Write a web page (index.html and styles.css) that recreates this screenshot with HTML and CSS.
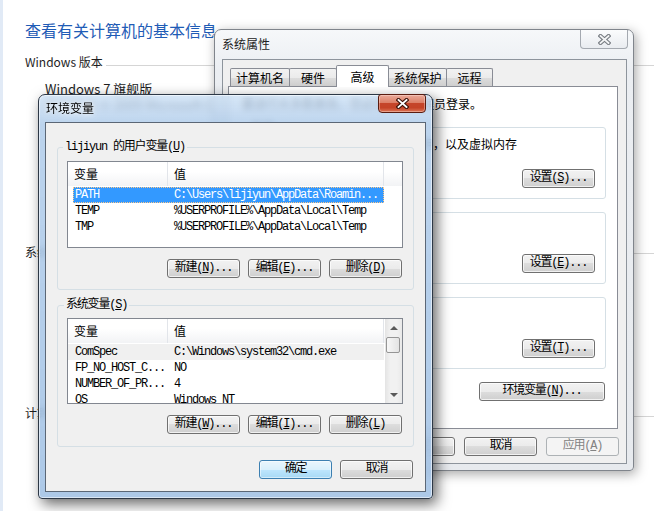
FILE: index.html
```html
<!DOCTYPE html>
<html lang="zh-CN">
<head>
<meta charset="utf-8">
<title>环境变量</title>
<link rel="stylesheet" href="styles.css">
</head>
<body>
<main class="cp">
  <h1 class="cp-title">查看有关计算机的基本信息</h1>
  <div class="cp-sec cp-ver"><span>Windows 版本</span><i class="cp-rule"></i></div>
  <p class="cp-line cp-edition">Windows 7 旗舰版</p>
  <p class="cp-line">版权所有 © 2009 Microsoft Corporation。保留所有权利。</p>
  <div class="cp-sec cp-sys"><span>系统</span><i class="cp-rule"></i></div>
  <div class="cp-sec cp-name"><span>计算机名称、域和工作组设置</span><i class="cp-rule"></i></div>
</main>

<section class="win win-sys">
  <header class="titlebar">
    <span class="title">系统属性</span>
    <span class="close close-inactive">
      <svg width="13" height="11" viewBox="0 0 13 11"><path d="M2.5 2 L10.5 9 M10.5 2 L2.5 9" stroke="#777c82" stroke-width="4" stroke-linecap="square"/><path d="M2.5 2 L10.5 9 M10.5 2 L2.5 9" stroke="#f4f5f6" stroke-width="1.8" stroke-linecap="square"/></svg>
    </span>
  </header>
  <div class="client sys-client">
    <nav class="tabs">
      <span class="tab tab-name">计算机名</span>
      <span class="tab tab-hw">硬件</span>
      <span class="tab tab-adv active">高级</span>
      <span class="tab tab-prot">系统保护</span>
      <span class="tab tab-remote">远程</span>
    </nav>
    <div class="sys-panel">
      <p class="admin-note">要进行大多数更改，您必须作为管理员登录。</p>
      <fieldset class="group sys-group">
        <legend>性能</legend>
        <p class="group-text">视觉效果，处理器计划，内存使用，以及虚拟内存</p>
        <div class="btn-row"><button class="btn">设置(<u>S</u>)...</button></div>
      </fieldset>
      <fieldset class="group sys-group">
        <legend class="legend-hidden"></legend>
        <div class="group-gap"></div>
        <div class="btn-row"><button class="btn">设置(<u>E</u>)...</button></div>
      </fieldset>
      <fieldset class="group sys-group">
        <legend class="legend-hidden"></legend>
        <div class="group-gap"></div>
        <div class="btn-row"><button class="btn">设置(<u>T</u>)...</button></div>
      </fieldset>
      <div class="btn-row env-row"><button class="btn btn-wide">环境变量(<u>N</u>)...</button></div>
    </div>
    <div class="btn-row dlg-row">
      <button class="btn">确定</button>
      <button class="btn">取消</button>
      <button class="btn" disabled>应用(<u>A</u>)</button>
    </div>
  </div>
</section>

<section class="win win-env">
  <header class="titlebar">
    <span class="title">环境变量</span>
    <span class="close close-active">
      <svg width="13" height="11" viewBox="0 0 13 11"><path d="M2.5 2 L10.5 9 M10.5 2 L2.5 9" stroke="#3b1209" stroke-width="4" stroke-linecap="square"/><path d="M2.5 2 L10.5 9 M10.5 2 L2.5 9" stroke="#ffffff" stroke-width="1.8" stroke-linecap="square"/></svg>
    </span>
  </header>
  <div class="client env-client">
    <fieldset class="group env-group">
      <legend class="sim legend-user">lijiyun 的用户变量(<u>U</u>)</legend>
      <div class="list">
        <div class="lv-main">
          <div class="lv-head"><span class="hc c1">变量</span><span class="hc c2">值</span><span class="hc hfill"></span></div>
          <div class="lv-rows sim">
            <div class="row sel"><span class="c1">PATH</span><span class="c2">C:\Users\lijiyun\AppData\Roamin...</span></div>
            <div class="row"><span class="c1">TEMP</span><span class="c2">%USERPROFILE%\AppData\Local\Temp</span></div>
            <div class="row"><span class="c1">TMP</span><span class="c2">%USERPROFILE%\AppData\Local\Temp</span></div>
          </div>
        </div>
      </div>
      <div class="btn-row">
        <button class="btn">新建(<u>N</u>)...</button>
        <button class="btn">编辑(<u>E</u>)...</button>
        <button class="btn">删除(<u>D</u>)</button>
      </div>
    </fieldset>
    <fieldset class="group env-group">
      <legend class="sim legend-sys">系统变量(<u>S</u>)</legend>
      <div class="list sys-list">
        <div class="lv-main">
          <div class="lv-head"><span class="hc c1">变量</span><span class="hc c2">值</span><span class="hc hfill"></span></div>
          <div class="lv-rows sim">
            <div class="row hot"><span class="c1">ComSpec</span><span class="c2">C:\Windows\system32\cmd.exe</span></div>
            <div class="row"><span class="c1">FP_NO_HOST_C...</span><span class="c2">NO</span></div>
            <div class="row"><span class="c1">NUMBER_OF_PR...</span><span class="c2">4</span></div>
            <div class="row"><span class="c1">OS</span><span class="c2">Windows_NT</span></div>
          </div>
        </div>
        <div class="vscroll">
          <span class="sb-btn sb-up"></span>
          <span class="sb-thumb"></span>
          <span class="sb-track"></span>
          <span class="sb-btn sb-down"></span>
        </div>
      </div>
      <div class="btn-row">
        <button class="btn">新建(<u>W</u>)...</button>
        <button class="btn">编辑(<u>I</u>)...</button>
        <button class="btn">删除(<u>L</u>)</button>
      </div>
    </fieldset>
    <div class="btn-row env-dlg-row">
      <button class="btn btn-default">确定</button>
      <button class="btn">取消</button>
    </div>
  </div>
</section>
</body>
</html>
```
FILE: styles.css
```css
* { box-sizing: border-box; }
html, body { margin: 0; padding: 0; }
body {
  width: 654px; height: 511px; overflow: hidden; position: relative;
  background: #fff; color: #000;
  font: 12px/16px "Noto Sans CJK SC", "Microsoft YaHei", sans-serif;
}
p { margin: 0; }
.sim { font-family: "Liberation Mono", "Noto Sans CJK SC", monospace; letter-spacing: -1.2px; }

/* background control panel */
.cp { height: 511px; border-left: 3px solid #e1eaf6; padding-left: 22px; }
.cp-title { margin: 0; padding-top: 21px; font-size: 16px; line-height: 18px; font-weight: normal; color: #1f5cb6; }
.cp-sec { display: flex; align-items: center; gap: 3px; margin-top: 15px; color: #1e1e1e; }
.cp-rule { flex: 1; height: 1px; background: #d5d5d5; margin-top: 6px; }
.cp-line { margin-left: 20px; font-size: 13px; color: #1e1e1e; }
.cp-edition { margin-top: 11px; }
.cp-sys { margin-top: 131px; }
.cp-name { margin-top: 145px; }
.cp-sys .cp-rule { margin-top: 3px; }

/* windows */
.win { position: absolute; display: flex; flex-direction: column; border-radius: 7px 7px 4px 4px; }
.win-sys {
  left: 214px; top: 29px; width: 420px; height: 442px;
  padding: 0 6px 6px 7px;
  border: 1px solid #80858c;
  background: linear-gradient(#f6f8fa, #ebeef2 40px, #e7eaee);
  box-shadow: 2px 3px 12px rgba(0,0,0,.35);
}
.win-env {
  left: 38px; top: 94px; width: 395px; height: 405px;
  padding: 0 6px 6px;
  border: 1px solid #2d3846;
  background: linear-gradient(rgba(204,224,245,.8), rgba(176,204,234,.85) 30px, rgba(164,195,229,.9));
  backdrop-filter: blur(3px);
  box-shadow: 4px 5px 14px rgba(0,0,0,.6), inset 0 0 0 1px rgba(255,255,255,.55);
}
.titlebar { flex: none; display: flex; align-items: flex-start; justify-content: space-between; }
.win-sys .titlebar { height: 29px; margin-right: -1px; }
.win-env .titlebar { height: 27px; padding-left: 1px; }
.title { padding-top: 6px; line-height: 16px; color: #222; }
.win-env .title { padding-top: 5px; color: #000; text-shadow: 0 0 8px #fff, 0 0 4px #fff; }
.close { display: flex; align-items: center; justify-content: center; width: 48px; height: 19px; border-radius: 0 0 4px 4px; }
.close-inactive { border: 1px solid #a4a9b0; border-top: none; background: linear-gradient(#fbfcfd, #e9ecf0); }
.close-active {
  margin-top: -1px; border: 1px solid #5a1c10; border-radius: 3px 3px 4px 4px;
  background: linear-gradient(#eaa999, #dc8068 45%, #c5452a 50%, #c44327 75%, #dd7658);
  box-shadow: inset 0 0 0 1px rgba(255,230,220,.4);
}

.client { flex: 1; display: flex; flex-direction: column; background: #f0f0f0; border: 1px solid #8d949c; }
.sys-client { padding-top: 5px; }
.env-client { border-color: #5b6776; padding: 17px 11px 0; }

/* tabs */
.tabs { display: flex; align-items: flex-end; padding-left: 7px; height: 21px; flex: none; }
.tab {
  height: 18px; margin-right: -1px;
  border: 1px solid #898c95; border-bottom: none; border-radius: 2px 2px 0 0;
  background: linear-gradient(#f2f2f2, #ebebeb 50%, #dddddd 50%, #cfcfcf);
  display: flex; align-items: center; justify-content: center; line-height: 14px;
}
.tab.active { height: 22px; margin-bottom: -1px; background: #fff; position: relative; z-index: 1; }
.tab-name { width: 60px; }
.tab-hw { width: 48px; }
.tab-adv { width: 53px; }
.tab-prot { width: 59px; }
.tab-remote { width: 47px; }

.sys-panel { flex: none; height: 343px; margin: 0 8px 0 5px; padding: 9px 11px 0; background: #fff; border: 1px solid #898c95; }
.admin-note { padding-left: 2px; }

.group { margin: 0; min-width: 0; border: 1px solid #d5dfe5; border-radius: 3px; }
.group legend { padding: 0 2px; line-height: 14px; }
.sys-group { margin-top: 6px; padding: 2px 10px 10px 12px; }
.sys-group:first-of-type { margin-top: 8px; }
.sys-group legend { margin-left: -4px; }
.sys-group .legend-hidden { height: 14px; width: 0; padding: 0; }
.group-gap { height: 16px; }

/* buttons */
.btn-row { display: flex; justify-content: flex-end; gap: 8px; }
.sys-group .btn-row { margin-top: 17px; }
.env-row { margin-top: 13px; margin-right: 1px; }
.dlg-row { margin-top: 8px; padding-right: 7px; gap: 9px; }
.btn {
  width: 73px; height: 19px; padding: 0; margin: 0;
  border: 1px solid #707070; border-radius: 3px;
  background: linear-gradient(#f2f2f2, #ebebeb 50%, #dddddd 50%, #cfcfcf);
  box-shadow: inset 0 0 0 1px rgba(255,255,255,.7);
  font: 12px/17px "Liberation Mono", "Noto Sans CJK SC", monospace; letter-spacing: -1.2px; color: #000;
  display: flex; align-items: center; justify-content: center;
}
.btn-wide { width: 126px; }
.btn-default { border-color: #3c7fb1; background: linear-gradient(#eaf6fd, #d9f0fc 50%, #bee6fd 50%, #a7d9f5); box-shadow: inset 0 0 0 1px rgba(255,255,255,.5); }
.btn:disabled { border-color: #adb2b5; background: #f4f4f4; box-shadow: none; color: #838383; }

/* env dialog */
.env-group { padding: 7px 10px 11px 9px; }
.env-group + .env-group { margin-top: 8px; padding-top: 6px; padding-bottom: 12px; }
.env-group .btn-row { margin-top: 11px; margin-right: 1px; }
.legend-user { margin-left: -4px; }
.legend-sys { margin-left: -3px; }
.env-dlg-row { margin-top: 13px; padding-right: 1px; }

.list { display: flex; height: 87px; border: 1px solid #828790; background: #fff; overflow: hidden; }
.sys-list { height: 86px; }
.lv-main { flex: 1; min-width: 0; display: flex; flex-direction: column; }
.lv-head { display: flex; flex: none; height: 24px; background: linear-gradient(#fff, #fff 40%, #f2f3f5); }
.hc { border-right: 1px solid #e2e5ea; padding-left: 6px; line-height: 23px; }
.c1 { width: 100px; flex: none; }
.c2 { width: 216px; flex: none; }
.hfill { flex: 1; border-right: none; }
.lv-rows { padding-top: 1px; }
.row { display: flex; height: 16px; line-height: 16px; width: 316px; white-space: nowrap; }
.row .c1 { padding-left: 7px; }
.row .c2 { padding-left: 6px; }
.row.sel { margin-left: 5px; width: 311px; background: #3399ff; color: #fff; outline: 1px dotted #ffc98a; outline-offset: -1px; }
.row.sel .c1 { width: 95px; padding-left: 2px; }
.row.hot { background: #f0f0f0; }

.vscroll {
  flex: none; width: 17px; display: flex; flex-direction: column;
  background: linear-gradient(90deg, #e4e4e4, #f1f1f1 30%, #f1f1f1 70%, #e9e9e9);
}
.sb-btn { flex: none; height: 17px; display: flex; align-items: center; justify-content: center; }
.sb-up::before { content: ""; border-left: 4px solid transparent; border-right: 4px solid transparent; border-bottom: 4px solid #5a5a5a; }
.sb-down::before { content: ""; border-left: 4px solid transparent; border-right: 4px solid transparent; border-top: 4px solid #5a5a5a; }
.sb-thumb { flex: none; height: 16px; margin: 1px 2px 0 1px; border: 1px solid #959595; border-radius: 2px; background: linear-gradient(90deg, #f7f7f7, #e3e3e3); }
.sb-track { flex: 1; }
```
